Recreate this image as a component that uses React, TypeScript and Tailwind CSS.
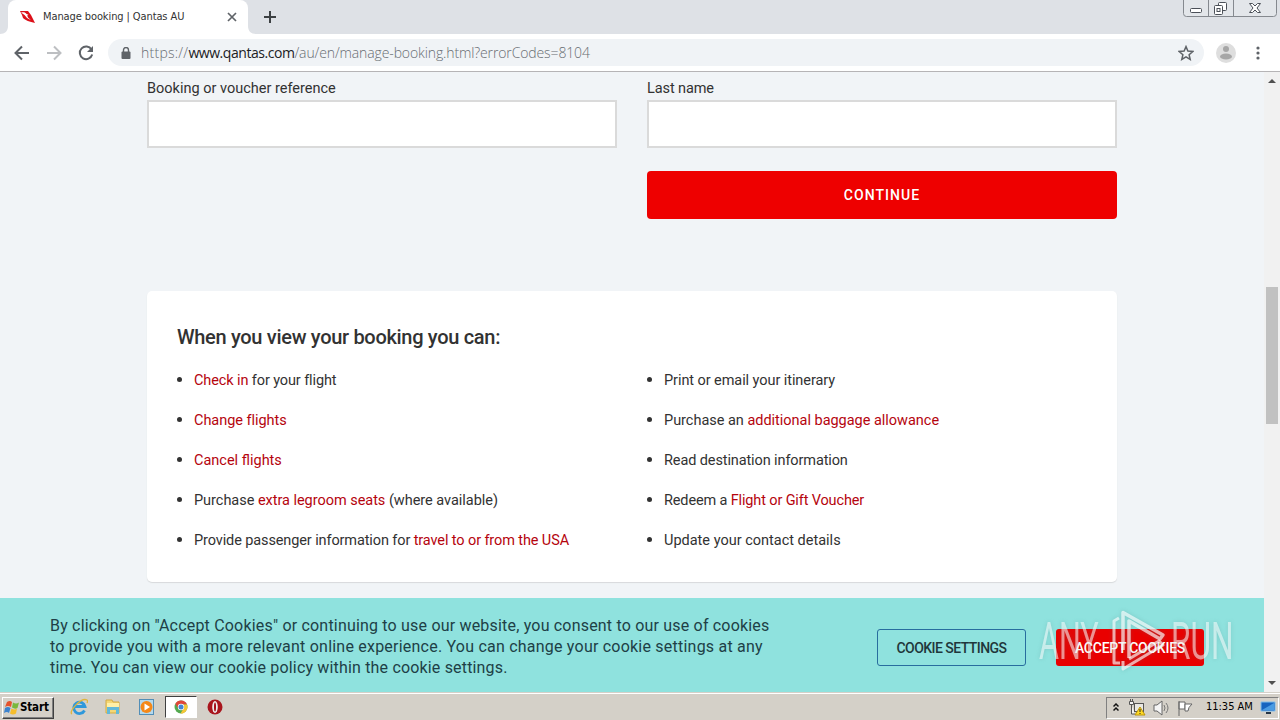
import type { ReactNode } from "react"

type Item = { before?: string; link?: string; after?: string; spacing: string }

const LEFT_ITEMS: Item[] = [
  { link: "Check in", after: " for your flight", spacing: "tracking-[-0.11px]" },
  { link: "Change flights", spacing: "tracking-[-0.04px]" },
  { link: "Cancel flights", spacing: "tracking-[0px]" },
  { before: "Purchase ", link: "extra legroom seats", after: " (where available)", spacing: "tracking-[-0.03px]" },
  { before: "Provide passenger information for ", link: "travel to or from the USA", spacing: "tracking-[-0.11px]" },
]

const RIGHT_ITEMS: Item[] = [
  { before: "Print or email your itinerary", spacing: "tracking-[-0.07px]" },
  { before: "Purchase an ", link: "additional baggage allowance", spacing: "tracking-[-0.02px]" },
  { before: "Read destination information", spacing: "tracking-[-0.11px]" },
  { before: "Redeem a ", link: "Flight or Gift Voucher", spacing: "tracking-[-0.14px]" },
  { before: "Update your contact details", spacing: "tracking-[0px]" },
]

export default function App() {
  return (
    <div className="flex h-[720px] w-[1280px] flex-col overflow-hidden bg-[#f1f4f7] font-[Roboto,'Liberation_Sans',sans-serif] text-[#323232]">
      <TabStrip />
      <Toolbar />
      <div className="flex h-[620px]">
        <main className="flex w-[1264px] flex-col">
          <BookingForm />
          <InfoCard />
          <CookieBanner />
        </main>
        <Scrollbar />
      </div>
      <Taskbar />
    </div>
  )
}

function TabStrip() {
  return (
    <header className="flex h-[34px] shrink-0 bg-[#dee1e6]">
      <svg width="8" height="34" className="shrink-0">
        <path d="M8 34H0c5 0 8-3 8-8z" fill="#fff" />
      </svg>
      <div className="flex w-[240px] items-center rounded-t-lg bg-white pl-3 pr-[11px]">
        <svg width="15" height="12" viewBox="0 0 15 12">
          <path d="M0 0h8L11 4l4 8C10 11 5 9 3 7L2 4z" fill="#dc1019" />
          <path d="M1 1.500c3-.5 4.500 0 5.500 1.500l2 .7-1.300.8.8 2 3 2.700-4-2.200L4.500 4z" fill="#fff" />
        </svg>
        <span className="ml-2 whitespace-nowrap font-['DejaVu_Sans_Condensed','DejaVu_Sans',sans-serif] text-[11px] tracking-[-0.1px] text-[#333]">
          Manage booking | Qantas AU
        </span>
        <svg width="10" height="10" viewBox="0 0 10 10" className="ml-auto" stroke="#5f6368" strokeWidth="1.7">
          <path d="M1 1l8 8M9 1L1 9" />
        </svg>
      </div>
      <svg width="8" height="34" className="shrink-0">
        <path d="M0 34h8c-5 0-8-3-8-8z" fill="#fff" />
      </svg>
      <svg width="12" height="12" viewBox="0 0 12 12" className="ml-2 mt-[11px]" stroke="#3c4043" strokeWidth="2">
        <path d="M6 0v12M0 6h12" />
      </svg>
      <svg width="94" height="18" viewBox="0 0 94 18" className="ml-auto mr-[3px]" fill="none">
        <path d="M.5 0v13.500q0 3 3 3h87q3 0 3-3V0" fill="#e3e6ea" stroke="#85898f" />
        <path d="M25.500 0v16M50.500 0v16" stroke="#85898f" />
        <rect x="7.500" y="8.500" width="11" height="4" rx="1" fill="#fff" stroke="#4b5058" />
        <rect x="35.500" y="2.500" width="8" height="8" rx="1" fill="#fff" stroke="#4b5058" />
        <rect x="31.500" y="5.500" width="8" height="9" rx="1" fill="#fff" stroke="#4b5058" />
        <rect x="34" y="8.500" width="3" height="3" fill="#fff" stroke="#4b5058" />
        <path d="M66.500 3.500h3l2.500 2.500 2.500-2.500h3L74 8l3.500 4.500h-3L72 10l-2.500 2.500h-3L70 8z" fill="#fff" stroke="#4b5058" />
      </svg>
    </header>
  )
}

function Toolbar() {
  return (
    <div className="flex h-[38px] shrink-0 items-center border-b border-[#b6b4b6] bg-white pl-[14px]">
      <svg width="16" height="16" viewBox="0 0 16 16" fill="none" stroke="#5f6368" strokeWidth="2">
        <path d="M15 8H2M8 1.500L1.500 8 8 14.500" />
      </svg>
      <svg width="16" height="16" viewBox="0 0 16 16" fill="none" stroke="#bdbfc2" strokeWidth="2" className="ml-4">
        <path d="M1 8h13M8 1.500L14.500 8 8 14.500" />
      </svg>
      <svg width="16" height="16" viewBox="0 0 16 16" fill="none" className="ml-4">
        <path d="M13.500 4.500A6.300 6.300 0 1 0 14.200 9.500" stroke="#5f6368" strokeWidth="2" />
        <path d="M15 1v6H9z" fill="#5f6368" />
      </svg>
      <div className="ml-[14px] flex h-[27px] w-[1096px] items-center rounded-full bg-[#f0f3f6] pl-[13px] pr-2.5">
        <svg width="10" height="12" viewBox="0 0 10 12">
          <path d="M2.500 5V3a2.500 2.500 0 0 1 5 0v2" fill="none" stroke="#5f6368" strokeWidth="1.400" />
          <rect x="0.500" y="4.500" width="9" height="7.500" rx="1" fill="#5f6368" />
        </svg>
        <div className="ml-[10px] whitespace-nowrap font-['Open_Sans','Noto_Sans',sans-serif] text-sm font-light tracking-[-0.12px] text-[#686d72]">
          <span className="tracking-[0.25px]">https://</span>
          <span className="font-normal tracking-[-0.45px] text-[#202124]">www.qantas.com</span>
          /au/en/manage-booking.html?errorCodes=8104
        </div>
        <svg width="16" height="16" viewBox="0 0 16 16" fill="none" stroke="#5f6368" strokeWidth="1.500" className="ml-auto">
          <path d="M8 1.600l1.900 4.500 4.900.4-3.700 3.200 1.100 4.700L8 11.900l-4.200 2.500 1.100-4.700L1.200 6.500l4.900-.4z" />
        </svg>
      </div>
      <svg width="20" height="20" viewBox="0 0 20 20" className="ml-3">
        <circle cx="10" cy="10" r="10" fill="#dedede" />
        <circle cx="10" cy="6" r="3" fill="#a6a6a6" />
        <ellipse cx="10" cy="13.500" rx="6" ry="3" fill="#a6a6a6" />
      </svg>
      <svg width="4" height="16" viewBox="0 0 4 16" className="ml-5" fill="#5f6368">
        <circle cx="2" cy="3" r="1.600" />
        <circle cx="2" cy="8" r="1.600" />
        <circle cx="2" cy="13" r="1.600" />
      </svg>
    </div>
  )
}

function Field({ label, spacing }: { label: string; spacing: string }) {
  return (
    <label className="block w-[470px]">
      <span className={`mb-0.5 block h-[18px] text-[14.5px] leading-[18px] ${spacing}`}>{label}</span>
      <input className="block h-12 w-full border-2 border-[#dadada] bg-white px-3 outline-none" />
    </label>
  )
}

function BookingForm() {
  return (
    <section className="ml-[147px] h-[219px] w-[970px] shrink-0 pt-2">
      <div className="flex gap-[30px]">
        <Field label="Booking or voucher reference" spacing="tracking-[0px]" />
        <Field label="Last name" spacing="tracking-[-0.1px]" />
      </div>
      <button className="ml-[500px] mt-[23px] block h-12 w-[470px] rounded bg-[#ee0000] text-sm font-medium tracking-[1.05px] text-white">
        CONTINUE
      </button>
    </section>
  )
}

function List({ items }: { items: Item[] }) {
  return (
    <ul className="w-[470px]">
      {items.map((item, i) => (
        <li key={i} className={`flex h-10 items-center text-[14.5px] ${item.spacing}`}>
          <span className="mb-0.5 mr-3 size-[5px] rounded-full bg-[#323232]" />
          <span className="whitespace-pre pt-px">
            {item.before}
            {item.link && <a className="text-[#b5040e]">{item.link}</a>}
            {item.after}
          </span>
        </li>
      ))}
    </ul>
  )
}

function InfoCard() {
  return (
    <section className="ml-[147px] h-[291px] w-[970px] shrink-0 rounded-[5px] bg-white pl-[30px] pt-8 shadow-[0_1px_1px_#d7d9db]">
      <h2 className="h-7 text-xl font-medium leading-7 tracking-[-0.31px]">When you view your booking you can:</h2>
      <div className="mt-[9px] flex">
        <List items={LEFT_ITEMS} />
        <List items={RIGHT_ITEMS} />
      </div>
    </section>
  )
}

function CookieBanner() {
  return (
    <section className="relative mt-4 flex h-[94px] shrink-0 items-center bg-[#8fe2de]">
      <div className="ml-[50px] w-[827px] whitespace-nowrap pt-0.5 text-base leading-[21px] text-[#203f46]">
        <p className="tracking-[0.19px]">By clicking on "Accept Cookies" or continuing to use our website, you consent to our use of cookies</p>
        <p className="tracking-[0.22px]">to provide you with a more relevant online experience. You can change your cookie settings at any</p>
        <p className="tracking-[0.17px]">time. You can view our cookie policy within the cookie settings.</p>
      </div>
      <button className="mt-1 h-[37px] w-[149px] whitespace-nowrap rounded-[3px] border border-[#286d9e] pt-0.5 text-sm font-medium tracking-[-0.55px] text-[#1f373b]">
        COOKIE SETTINGS
      </button>
      <button className="ml-[30px] mt-1 h-[37px] w-[148px] whitespace-nowrap rounded-[3px] bg-[#e90000] pt-0.5 text-sm font-medium tracking-[-0.25px] text-white">
        ACCEPT COOKIES
      </button>
      <Watermark />
    </section>
  )
}

function Watermark() {
  return (
    <div className="pointer-events-none absolute left-[1039px] top-[10px] flex h-[66px] w-[194px] items-center font-['Roboto','Liberation_Sans',sans-serif] text-[51px] leading-none text-white/55 drop-shadow-[0_0_2px_rgba(70,130,130,0.4)]">
      <div className="w-[66px] shrink-0">
        <span className="block w-max origin-left scale-x-[0.6]">ANY</span>
      </div>
      <svg width="66" height="66" viewBox="0 0 66 66" fill="none" stroke="#fff" strokeOpacity="0.65" strokeWidth="3.500" strokeLinejoin="round" className="shrink-0">
        <path d="M18 42V4.500L58 27l-3 4-31-18v37" />
        <path d="M14 10l-5 3v42h6M18 53v8l40-24-4-4-30 18" strokeWidth="3" />
      </svg>
      <div className="w-[62px] shrink-0">
        <span className="block w-max origin-left scale-x-[0.62]">RUN</span>
      </div>
    </div>
  )
}

function Scrollbar() {
  return (
    <div className="flex h-[620px] w-4 flex-col items-center bg-[#f1f1f1]">
      <svg width="8" height="4" viewBox="0 0 8 4" className="mt-[7px]">
        <path d="M0 4l4-4 4 4z" fill="#505050" />
      </svg>
      <div className="mt-[204px] h-[137px] w-3 bg-[#c1c1c1]" />
      <svg width="8" height="4" viewBox="0 0 8 4" className="mb-[7px] mt-auto">
        <path d="M0 0l4 4 4-4z" fill="#505050" />
      </svg>
    </div>
  )
}

function TaskIcon({ children }: { children: ReactNode }) {
  return (
    <svg width="18" height="18" viewBox="0 0 18 18" fill="none">
      {children}
    </svg>
  )
}

function Taskbar() {
  return (
    <footer className="flex h-7 shrink-0 items-center border-t border-[#d4d0c8] bg-[#d4d0c8] font-['DejaVu_Sans_Condensed','DejaVu_Sans',sans-serif] text-[11px] text-black shadow-[inset_0_1px_0_#fff]">
      <div className="ml-0.5 mt-0.5 flex h-[22px] w-[52px] items-center border border-b-[#404040] border-l-white border-r-[#404040] border-t-white pl-px font-bold shadow-[inset_-1px_-1px_0_#808080]">
        <svg width="16" height="16" viewBox="0 0 16 16" className="shrink-0">
          <path d="M3 2q3-2 5 0L7 7Q4 5 1 7z" fill="#e5532d" />
          <path d="M9 2.500q3 2 6 0L13.500 8Q11 9.500 8 7.500z" fill="#79b83c" />
          <path d="M1 8q3-2 5.500 0L5 13q-2-2-5 0z" fill="#3c83cf" />
          <path d="M7.500 8.500q3 2 5.500 0L12 13.500q-3 2-6 0z" fill="#f5bd2b" />
        </svg>
        <span className="text-[11.5px] tracking-[-0.15px]">Start</span>
      </div>
      <div className="ml-4 flex items-center">
        <TaskIcon>
          <path d="M14.500 12.500A5.700 5.700 0 1 1 15 8.500H5" stroke="#2e98db" strokeWidth="2.800" />
          <path d="M2 16C-2 14 11-1 17 2c1 1 .5 2 0 3" stroke="#dfb53b" strokeWidth="1.300" />
        </TaskIcon>
        <div className="ml-4 h-[18px]">
          <TaskIcon>
            <path d="M2 2h6l1 2h6v11H2z" fill="#f4d776" stroke="#d3ab42" />
            <path d="M3 5h12v5H3z" fill="#fff0a7" />
            <path d="M3 16V9h12v7h-3v-4H6v4z" fill="#62b9d9" />
          </TaskIcon>
        </div>
        <div className="ml-4 h-[18px]">
          <TaskIcon>
            <rect x="1.500" y="1.500" width="14" height="15" fill="#b5d9ed" stroke="#528eb7" />
            <circle cx="8.500" cy="9" r="6" fill="#f58818" />
            <path d="M6.500 5.500v7L12 9z" fill="#fff" />
          </TaskIcon>
        </div>
      </div>
      <div className="ml-[9px] mt-px flex h-[22px] w-8 items-center justify-center border border-b-white border-l-[#404040] border-r-white border-t-[#404040] bg-white">
        <svg width="14" height="14" viewBox="0 0 14 14">
          <circle cx="7" cy="7" r="6.500" fill="#53a94f" />
          <path d="M1.300 3.800A6.500 6.500 0 0 1 13 4.500H7L4 8z" fill="#e04639" />
          <path d="M13 4.500A6.500 6.500 0 0 1 6.500 13.500L9.500 8.500 9 4.500z" fill="#f5c636" />
          <circle cx="7" cy="7" r="3.200" fill="#fff" />
          <circle cx="7" cy="7" r="2.500" fill="#4285d4" />
        </svg>
      </div>
      <svg width="16" height="16" viewBox="0 0 16 16" className="ml-[10px]">
        <circle cx="8" cy="8" r="7.500" fill="#a9151d" />
        <ellipse cx="8" cy="8" rx="2.800" ry="6" fill="#eee" />
        <ellipse cx="8" cy="8" rx="1" ry="4.500" fill="#a50b16" />
      </svg>
      <div className="ml-auto mr-px mt-0.5 flex h-[22px] w-[173px] items-center border border-b-white border-l-[#808080] border-r-white border-t-[#808080] pl-1.5">
        <svg width="6" height="9" viewBox="0 0 6 9" fill="none" stroke="#111" strokeWidth="1.500">
          <path d="M.5 3.500L3 1l2.500 2.500M.5 7.500L3 5l2.500 2.500" />
        </svg>
        <svg width="18" height="18" viewBox="0 0 18 18" fill="none" className="ml-[9px]">
          <path d="M1.500 2.500h4v3h-4zM2.500 0v2M4.500 0v2M3.500 6v9H7" fill="#f4f4f4" stroke="#555" />
          <rect x="6.500" y="4.500" width="9" height="8" fill="#e9e8e3" stroke="#555" />
          <path d="M12 8l5 8H7z" fill="#ffda24" stroke="#bb940a" />
          <path d="M12 10v3m0 1v1" stroke="#222" />
        </svg>
        <svg width="18" height="18" viewBox="0 0 18 18" fill="none" className="ml-1.5">
          <path d="M2 6h3l5-4v14l-5-4H2z" fill="#f5f5f5" stroke="#666" />
          <path d="M12 6q2 3 0 6M14 4q4 5 0 10" stroke="#777" />
        </svg>
        <svg width="18" height="18" viewBox="0 0 18 18" fill="none" className="ml-1.5">
          <path d="M3 2v15M3 3h6v7H3z" fill="#fff" stroke="#666" />
          <path d="M9 5h7l-3 3.500L12 12H9z" fill="#fff" stroke="#666" />
        </svg>
        <span className="ml-3 whitespace-nowrap tracking-[-0.02px]">11:35 AM</span>
        <svg width="16" height="16" viewBox="0 0 16 16" className="ml-[7px] shrink-0">
          <path d="M1 2h14v9H1z" fill="#1764bf" stroke="#80bdeb" />
          <path d="M2 10L14 3v7z" fill="#4b9ce3" />
          <path d="M6 12h5v2H6z" fill="#263647" />
        </svg>
      </div>
    </footer>
  )
}
